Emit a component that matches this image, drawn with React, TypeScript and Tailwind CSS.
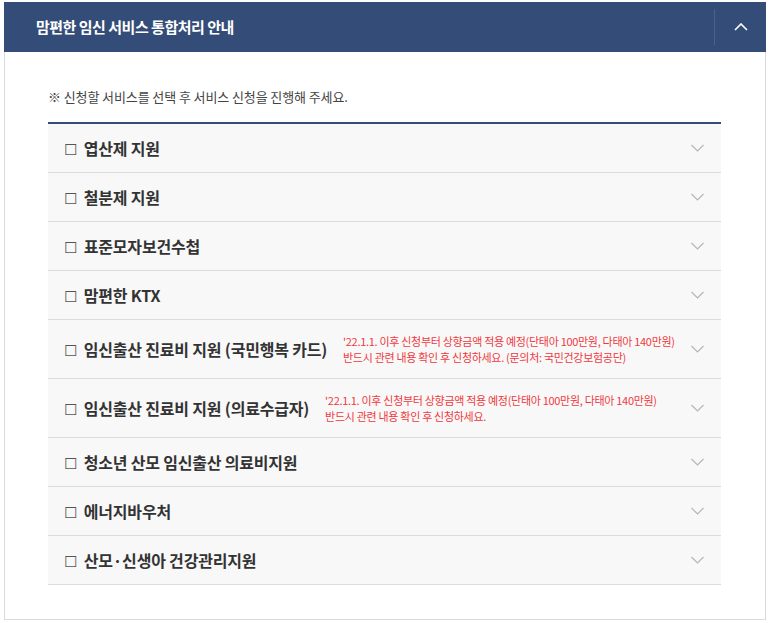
import React, { useState } from 'react';

type Item = {
  title: string;
  notes?: string[];
};

const items: Item[] = [
  { title: '엽산제 지원' },
  { title: '철분제 지원' },
  { title: '표준모자보건수첩' },
  { title: '맘편한 KTX' },
  {
    title: '임신출산 진료비 지원 (국민행복 카드)',
    notes: [
      "'22.1.1. 이후 신청부터 상향금액 적용 예정(단태아 100만원, 다태아 140만원)",
      '반드시 관련 내용 확인 후 신청하세요. (문의처: 국민건강보험공단)',
    ],
  },
  {
    title: '임신출산 진료비 지원 (의료수급자)',
    notes: [
      "'22.1.1. 이후 신청부터 상향금액 적용 예정(단태아 100만원, 다태아 140만원)",
      '반드시 관련 내용 확인 후 신청하세요.',
    ],
  },
  { title: '청소년 산모 임신출산 의료비지원' },
  { title: '에너지바우처' },
  { title: '산모·신생아 건강관리지원' },
];

const ChevronDown = () => (
  <svg width="13" height="8" viewBox="0 0 13 8" fill="none">
    <path d="M0.5 1l6 6 6-6" stroke="#b5b5b5" strokeWidth="1.1" />
  </svg>
);

const ChevronUp = () => (
  <svg width="14" height="8" viewBox="0 0 14 8" fill="none">
    <path d="M1 7l6-6 6 6" stroke="#ffffff" strokeWidth="1.6" />
  </svg>
);

const ServiceRow: React.FC<{ item: Item }> = ({ item }) => (
  <div
    className={`flex items-center justify-between bg-[#f8f8f8] border-b border-[#dcdcdc] pl-4 pr-[17px] ${
      item.notes ? 'h-[59px]' : 'h-[49px]'
    }`}
  >
    <div className="flex items-center">
      <span className="text-[16px] font-semibold text-[#333] tracking-[-0.2px]">
        <span className="font-normal text-[#555] text-[15px] mr-[7px]">☐</span>
        {item.title}
      </span>
      {item.notes && (
        <div className="ml-4 text-[11px] leading-[16px] text-[#f0383d] tracking-[-0.3px] pb-[1px]">
          {item.notes.map((n) => (
            <p key={n}>{n}</p>
          ))}
        </div>
      )}
    </div>
    <div className="shrink-0">
      <ChevronDown />
    </div>
  </div>
);

export default function App() {
  const [open, setOpen] = useState(true);

  return (
    <div
      className="w-[773px] h-[623px] bg-white pt-[2px] pl-[4px]"
      style={{ fontFamily: '"Noto Sans CJK KR", "Noto Sans", sans-serif' }}
    >
      <div className="w-[762px] h-[618px] border border-[#dadada] flex flex-col">
        <div className="h-[50px] bg-[#344d78] flex items-center justify-between -mx-px -mt-px">
          <h2 className="pl-[32px] text-white text-[15px] font-bold tracking-[-0.5px]">
            맘편한 임신 서비스 통합처리 안내
          </h2>
          <div className="flex items-center h-full">
            <div className="w-px h-[36px] bg-[#4a6290]" />
            <button
              onClick={() => setOpen(!open)}
              className="w-[51px] h-full flex items-center justify-center"
            >
              <ChevronUp />
            </button>
          </div>
        </div>

        {open && (
          <div className="pl-[43px] pr-[44px] pt-[35px]">
            <p className="text-[13px] text-[#444] tracking-[-0.1px] leading-[20px] mb-[15px]">
              ※ 신청할 서비스를 선택 후 서비스 신청을 진행해 주세요.
            </p>
            <div className="border-t-2 border-[#344d78]">
              {items.map((it) => (
                <ServiceRow key={it.title} item={it} />
              ))}
            </div>
          </div>
        )}
      </div>
    </div>
  );
}
